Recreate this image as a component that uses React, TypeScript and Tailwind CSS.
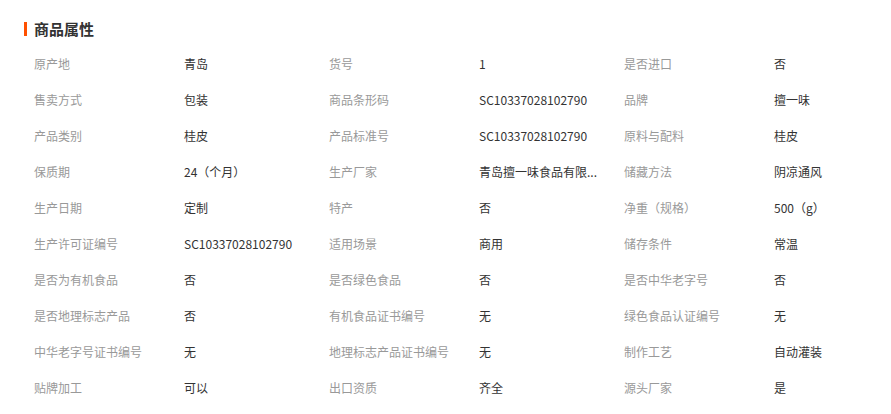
import React from 'react';

interface Attr {
  label: string;
  value: string;
}

const attrs: Attr[] = [
  { label: '原产地', value: '青岛' },
  { label: '货号', value: '1' },
  { label: '是否进口', value: '否' },
  { label: '售卖方式', value: '包装' },
  { label: '商品条形码', value: 'SC10337028102790' },
  { label: '品牌', value: '擅一味' },
  { label: '产品类别', value: '桂皮' },
  { label: '产品标准号', value: 'SC10337028102790' },
  { label: '原料与配料', value: '桂皮' },
  { label: '保质期', value: '24（个月）' },
  { label: '生产厂家', value: '青岛擅一味食品有限...' },
  { label: '储藏方法', value: '阴凉通风' },
  { label: '生产日期', value: '定制' },
  { label: '特产', value: '否' },
  { label: '净重（规格）', value: '500（g）' },
  { label: '生产许可证编号', value: 'SC10337028102790' },
  { label: '适用场景', value: '商用' },
  { label: '储存条件', value: '常温' },
  { label: '是否为有机食品', value: '否' },
  { label: '是否绿色食品', value: '否' },
  { label: '是否中华老字号', value: '否' },
  { label: '是否地理标志产品', value: '否' },
  { label: '有机食品证书编号', value: '无' },
  { label: '绿色食品认证编号', value: '无' },
  { label: '中华老字号证书编号', value: '无' },
  { label: '地理标志产品证书编号', value: '无' },
  { label: '制作工艺', value: '自动灌装' },
  { label: '贴牌加工', value: '可以' },
  { label: '出口资质', value: '齐全' },
  { label: '源头厂家', value: '是' },
];

const App: React.FC = () => {
  return (
    <div
      className="min-h-screen bg-white pl-[24px] pt-[19px]"
      style={{ fontFamily: '"Noto Sans CJK SC", "Liberation Sans", sans-serif' }}
    >
      {/* Section title */}
      <div className="flex items-center h-[20px]">
        <span className="w-[3px] h-[14px] bg-[#ff5000]" />
        <h2 className="ml-[7px] text-[15px] font-bold text-[#333] leading-[20px]">商品属性</h2>
      </div>

      {/* Attribute grid */}
      <div className="mt-[7px] ml-[10px] grid grid-cols-[295px_295px_250px]">
        {attrs.map((a) => (
          <div key={a.label} className="flex items-center h-[36px] text-[12px]">
            <span className="w-[150px] text-[#999] whitespace-nowrap">{a.label}</span>
            <span className="text-[#333] whitespace-nowrap">{a.value}</span>
          </div>
        ))}
      </div>
    </div>
  );
};

export default App;
